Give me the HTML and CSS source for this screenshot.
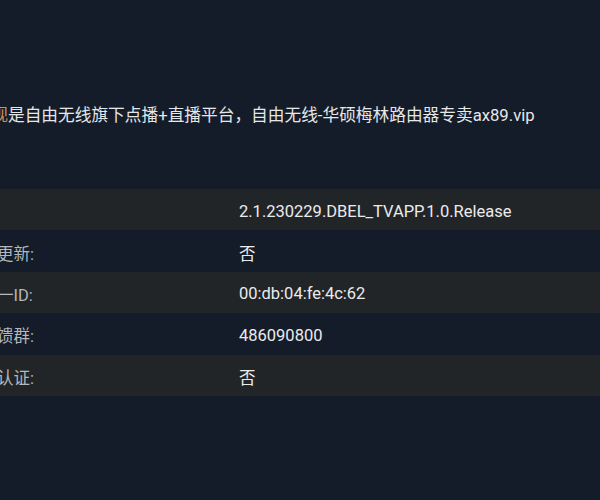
FILE: index.html
```html
<!DOCTYPE html>
<html lang="zh-CN">
<head>
<meta charset="utf-8">
<title>关于</title>
<link rel="stylesheet" href="styles.css">
</head>
<body>
<div class="page">
  <p class="intro"><span class="brand">视</span>是自由无线旗下点播+直播平台，自由无线-华硕梅林路由器专卖ax89.vip</p>
  <div class="table">
    <div class="row alt"><span class="label">版本:</span><span class="value">2.1.230229.DBEL_TVAPP.1.0.Release</span></div>
    <div class="row"><span class="label">是否有更新:</span><span class="value">否</span></div>
    <div class="row alt"><span class="label">设备唯一ID:</span><span class="value">00:db:04:fe:4c:62</span></div>
    <div class="row"><span class="label">官方反馈群:</span><span class="value">486090800</span></div>
    <div class="row alt"><span class="label">是否已认证:</span><span class="value">否</span></div>
  </div>
</div>
</body>
</html>
```
FILE: styles.css
```css
html, body {
  margin: 0;
  padding: 0;
  background: #131c28;
  overflow: hidden;
}
body {
  width: 600px;
  height: 500px;
  font-family: Roboto, "Noto Sans CJK SC", sans-serif;
}
.page {
  padding-top: 104px;
}
.intro {
  margin: 0 0 0 -8.7px;
  font-size: 16.7px;
  line-height: 24px;
  color: #e6e7e9;
  white-space: nowrap;
}
.brand {
  color: #c8935a;
}
.table {
  margin-top: 61px;
  margin-left: -52.5px;
  width: 652.5px;
}
.row {
  display: flex;
  align-items: center;
  box-sizing: border-box;
  height: 41.4px;
  padding-top: 3px;
  font-size: 16.5px;
}
.row.alt {
  background: #222528;
}
.label {
  width: 291.5px;
  flex: none;
  color: #b4b7bb;
  white-space: nowrap;
}
.value {
  color: #ebebec;
  white-space: nowrap;
}
```
